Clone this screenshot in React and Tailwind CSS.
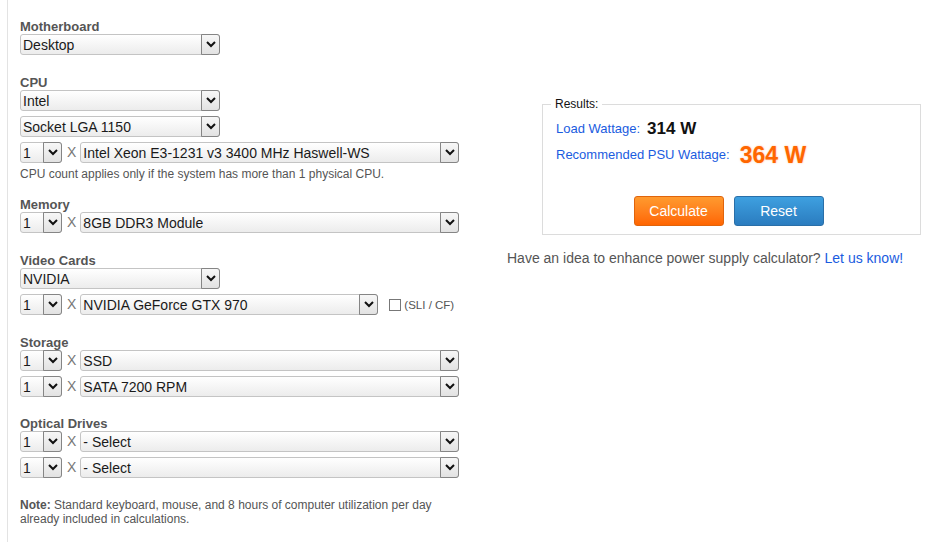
import React from "react";

function Chevron() {
  return (
    <svg width="10" height="7" viewBox="0 0 10 7" fill="none">
      <polyline points="1,1 5,5 9,1" stroke="#111" strokeWidth="2" strokeLinejoin="miter" />
    </svg>
  );
}

function Select({ w, children }) {
  return (
    <div
      className={
        "flex h-[21px] items-stretch rounded-[3px] border border-[#c4c4c4] bg-linear-to-b from-white to-[#ececec] " + w
      }
    >
      <div className="min-w-0 flex-1 truncate pl-[2px] pt-[1px] text-[14px] leading-[18px] text-[#1a1a1a]">{children}</div>
      <div className="-my-px -mr-px flex w-[19px] shrink-0 items-center justify-center rounded-r-[3px] border border-[#858585] bg-linear-to-b from-[#f7f7f7] to-[#e2e2e2]">
        <Chevron />
      </div>
    </div>
  );
}

function QtyRow({ children, mainW = "w-[379px]", extra }) {
  return (
    <div className="flex items-center">
      <Select w="w-[42px]">1</Select>
      <span className="ml-[5px] mr-[4px] text-[14px] leading-[19px] text-[#777]">X</span>
      <Select w={mainW}>{children}</Select>
      {extra}
    </div>
  );
}

function Label({ children, className = "" }) {
  return (
    <div className={"text-[13px] font-bold leading-[15px] text-[#555] " + className}>{children}</div>
  );
}

export default function App() {
  return (
    <div
      className="flex min-h-[542px] bg-white"
      style={{ fontFamily: '"Liberation Sans", Arial, sans-serif' }}
    >
      {/* Left form column */}
      <div className="ml-[7px] w-[465px] border-l border-[#e3e3e3] pl-[12px] pt-[19px]">
        <Label>Motherboard</Label>
        <Select w="w-[200px]">Desktop</Select>

        <Label className="mt-[20px]">CPU</Label>
        <div className="flex flex-col gap-[5px]">
          <Select w="w-[200px]">Intel</Select>
          <Select w="w-[200px]">Socket LGA 1150</Select>
          <QtyRow>Intel Xeon E3-1231 v3 3400 MHz Haswell-WS</QtyRow>
        </div>
        <div className="mt-[4px] text-[12px] leading-[14px] text-[#555]">
          CPU count applies only if the system has more than 1 physical CPU.
        </div>

        <Label className="mt-[16px]">Memory</Label>
        <QtyRow>8GB DDR3 Module</QtyRow>

        <Label className="mt-[20px]">Video Cards</Label>
        <div className="flex flex-col gap-[5px]">
          <Select w="w-[200px]">NVIDIA</Select>
          <QtyRow
            mainW="w-[298px]"
            extra={
              <div className="ml-[11px] flex items-center">
                <span className="h-[12px] w-[12px] border border-[#777] bg-white" />
                <span className="ml-[3px] text-[11.5px] leading-[14px] text-[#555]">(SLI / CF)</span>
              </div>
            }
          >
            NVIDIA GeForce GTX 970
          </QtyRow>
        </div>

        <Label className="mt-[20px]">Storage</Label>
        <div className="flex flex-col gap-[5px]">
          <QtyRow>SSD</QtyRow>
          <QtyRow>SATA 7200 RPM</QtyRow>
        </div>

        <Label className="mt-[19px]">Optical Drives</Label>
        <div className="flex flex-col gap-[5px]">
          <QtyRow>- Select</QtyRow>
          <QtyRow>- Select</QtyRow>
        </div>

        <div className="mt-[20px] text-[12px] leading-[14px] text-[#555]">
          <span className="font-bold">Note:</span> Standard keyboard, mouse, and 8 hours of computer utilization per day
          <br />
          already included in calculations.
        </div>
      </div>

      {/* Right results column */}
      <div className="ml-[35px] pt-[97px]">
        <fieldset className="ml-[35px] w-[379px] border border-[#dcdcdc] pb-[8px]">
          <legend className="ml-[8px] px-[4px] text-[12px] leading-[14px] text-[#111]">Results:</legend>
          <div className="pl-[13px]">
            <div className="mt-[7px] flex h-[22px] items-center">
              <span className="text-[13px] text-[#1a5ce0]">Load Wattage:</span>
              <span className="ml-[7px] text-[17px] font-bold text-[#111]">314 W</span>
            </div>
            <div className="mt-[2px] flex h-[26px] items-center">
              <span className="text-[13px] text-[#1a5ce0]">Recommended PSU Wattage:</span>
              <span className="ml-[10px] text-[23px] font-bold text-[#ff6600] [text-shadow:0_0_2px_rgba(255,140,60,0.6)]">
                364 W
              </span>
            </div>
          </div>
          <div className="mt-[28px] flex justify-center gap-[10px] pr-[6px]">
            <button className="h-[30px] w-[90px] rounded-[3px] border border-[#e0640c] bg-linear-to-b from-[#ff9a2e] to-[#ff6500] text-[14px] text-white">
              Calculate
            </button>
            <button className="h-[30px] w-[90px] rounded-[3px] border border-[#2a6fa8] bg-linear-to-b from-[#3ea0e0] to-[#2b7cbf] text-[14px] text-white">
              Reset
            </button>
          </div>
        </fieldset>
        <div className="mt-[14px] text-[14px] leading-[18px] text-[#555]">
          Have an idea to enhance power supply calculator? <span className="text-[#1a5ce0]">Let us know!</span>
        </div>
      </div>
    </div>
  );
}
